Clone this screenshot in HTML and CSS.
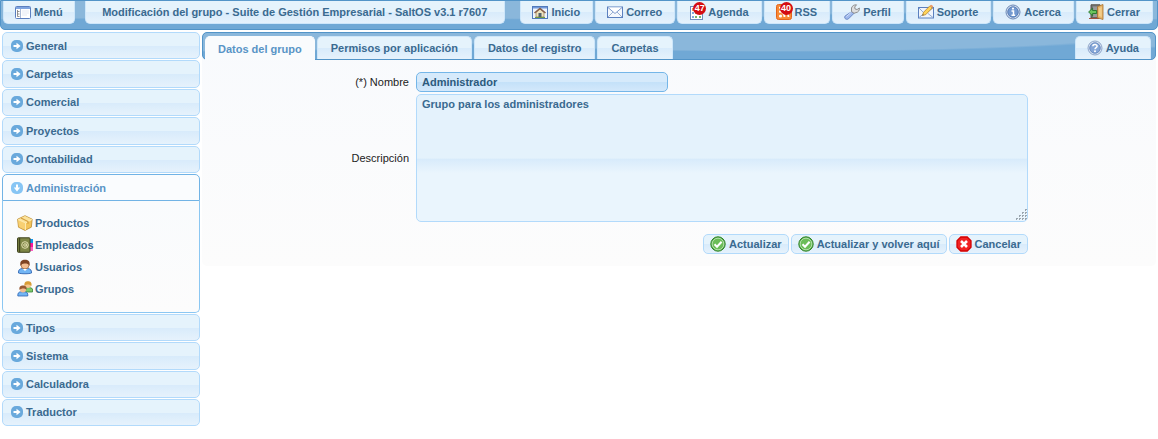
FILE: index.html
```html
<!DOCTYPE html>
<html lang="es">
<head>
<meta charset="utf-8">
<title>Modificación del grupo - SaltOS</title>
<link rel="stylesheet" href="styles.css">
</head>
<body>
<svg class="defs" aria-hidden="true">
  <symbol id="go" viewBox="0 0 12 12"><rect width="12" height="12" rx="5" fill="currentColor"/><path d="M2.500 5h3V2.800L9.600 6 5.500 9.200V7h-3z" fill="#fff"/></symbol>
  <symbol id="ok" viewBox="0 0 16 16"><circle cx="8" cy="8" r="7.200" fill="#4ba23c" stroke="#2f8428"/><circle cx="8" cy="8" r="5.900" fill="#6cbd58" stroke="#c5e8bd" stroke-width=".9"/><path d="M4.500 8.200l2.500 2.500 4.600-5" fill="none" stroke="#fff" stroke-width="2"/></symbol>
</svg>
<header class="topbar">
  <button class="tool" type="button"><svg class="ico" viewBox="0 0 16 16"><rect x=".5" y="2.500" width="15" height="12" rx="1" fill="#fff" stroke="#5b7fc0"/><path d="M1 3h14v2H1z" fill="#7fa5e0"/><path d="M5.500 5v9" stroke="#a9b9d6"/><path d="M2.500 6v6.500M2.500 7.500h2M2.500 10h2M2.500 12.500h2" stroke="#777" stroke-width=".8"/><path d="M7 7h7M7 9h7M7 11h5" stroke="#e4e9f3"/></svg>Menú</button>
  <button class="tool title" type="button">Modificación del grupo - Suite de Gestión Empresarial - SaltOS v3.1 r7607</button>
  <nav class="tools">
    <button class="tool" type="button"><svg class="ico" viewBox="0 0 16 16"><rect x=".5" y="2.500" width="15" height="12" fill="#eef4fc" stroke="#527abb"/><path d="M1 3h14v1.500H1z" fill="#7199da"/><path d="M4 8.500L8 5l4 3.500V13H4z" fill="#eee2bd" stroke="#9a7b4d" stroke-width=".7"/><path d="M2.500 9L8 4.500 13.500 9" fill="none" stroke="#865f4b" stroke-width="1.600"/><path d="M6.500 9h3v4h-3z" fill="#52636c"/><path d="M3 13.500h10" stroke="#6f9a43"/></svg>Inicio</button>
    <button class="tool" type="button"><svg class="ico" viewBox="0 0 16 16"><rect x=".5" y="3" width="15" height="10.500" fill="#f4f8fd" stroke="#5b80bf"/><path d="M1 13l5-5M15 13l-5-5" stroke="#9bb0d2"/><path d="M1 3.500l7 6 7-6" fill="#fff" stroke="#7f9cce"/></svg>Correo</button>
    <button class="tool" type="button"><span class="badged"><svg class="ico" viewBox="0 0 16 16"><rect x="1.500" y="2.500" width="12" height="13" fill="#fff" stroke="#6f8cbd"/><rect x="3" y="4" width="4" height="3" fill="#f0945c"/><path d="M3 8h2v2H3zM9 8h2v2H9zM3 12h2v2H3z" fill="#83a8d9"/><path d="M6 8h2v2H6zM6 12h2v2H6zM10 12h2v2h-2z" fill="#79b66a"/></svg><span class="badge">47</span></span>Agenda</button>
    <button class="tool" type="button"><span class="badged"><svg class="ico" viewBox="0 0 16 16"><rect x=".5" y=".5" width="15" height="15" rx="2" fill="#f78a35" stroke="#e4641b"/><circle cx="4.500" cy="12" r="1.600" fill="#fff"/><path d="M3 7.500a5.500 5.500 0 0 1 5.500 5.500M3 3.700a9.300 9.300 0 0 1 9.500 9.300" fill="none" stroke="#fff" stroke-width="1.800"/></svg><span class="badge">40</span></span>RSS</button>
    <button class="tool" type="button"><svg class="ico" viewBox="0 0 16 16"><path d="M8 7.500l2 1.800-5.500 5.500c-1 .8-2.600.6-3.300-.2-.8-.9-.6-2 0-2.700z" fill="#9fb9ec" stroke="#617fc0" stroke-width=".9"/><path d="M2.500 12.500l5-4.500" stroke="#d5e1fa"/><path d="M7.500 7.500V4C8 2 10 .6 12.500.8L10.700 3l.4 2 2 .5L15.400 4c.3 2.500-1.400 4.500-3.400 4.600l-2 .7z" fill="#dedede" stroke="#858585" stroke-width=".9"/></svg>Perfil</button>
    <button class="tool" type="button"><svg class="ico" viewBox="0 0 16 16"><rect x=".5" y="3.500" width="15" height="10.500" fill="#f0f5fc" stroke="#5b80bf"/><path d="M1 4l6 6 8-6M1 13.500l5-4M15 13.500l-5-4" fill="none" stroke="#94add3"/><path d="M4.500 11.500l1-3.200 6.500-6.600 2.300 2.200-6.500 6.700z" fill="#ffd45a" stroke="#b5842d" stroke-width=".8"/><path d="M12 1.700l1-1c1 0 2 1 2.200 2l-1 1z" fill="#ec9a6a"/><path d="M4.500 11.500l.4-1.300.9.900z" fill="#444"/></svg>Soporte</button>
    <button class="tool" type="button"><svg class="ico" viewBox="0 0 16 16"><circle cx="8" cy="8" r="7" fill="#dbe5f4" stroke="#6c88b5"/><circle cx="8" cy="8" r="5.300" fill="#7399d0" stroke="#486fa9" stroke-width=".8"/><path d="M6.500 7H8.500v4M6.500 11.200h3.600" fill="none" stroke="#fff" stroke-width="1.500"/><circle cx="8" cy="4.600" r="1.100" fill="#fff"/></svg>Acerca</button>
    <button class="tool" type="button"><svg class="ico" viewBox="0 0 16 16"><path d="M3 .8h9V14H3z" fill="#777" stroke="#565047"/><path d="M5 2.500h5V13H5z" fill="#9a9a9a"/><path d="M1 14.500h10" stroke="#a3503b"/><path d="M9.500 2.500L15 .5v15l-5.500-1.800z" fill="#e6b56a" stroke="#a8702c" stroke-width=".8"/><path d="M11 4l2.800-1v10L11 12z" fill="#f2cc88"/><path d="M.6 8l4-3.800v2.300h4v3h-4v2.300z" fill="#6bc35d" stroke="#23752a" stroke-width=".9"/></svg>Cerrar</button>
  </nav>
</header>
<div class="page">
  <aside class="sidebar">
    <div class="group upper">
      <button class="fold" type="button"><svg class="go"><use href="#go"/></svg>General</button>
      <button class="fold" type="button"><svg class="go"><use href="#go"/></svg>Carpetas</button>
      <button class="fold" type="button"><svg class="go"><use href="#go"/></svg>Comercial</button>
      <button class="fold" type="button"><svg class="go"><use href="#go"/></svg>Proyectos</button>
      <button class="fold" type="button"><svg class="go"><use href="#go"/></svg>Contabilidad</button>
    </div>
    <section>
      <button class="fold open" type="button"><svg class="go down"><use href="#go"/></svg>Administración</button>
      <div class="links">
        <a href="#"><svg class="ico" viewBox="0 0 16 16"><path d="M8 .7l7.200 3.500-.9 8L8 15.400l-6.500-3.200-.9-8z" fill="#f3c45b" stroke="#bd8b2e" stroke-width=".8"/><path d="M1 4.400L8 1l7 3.400L8.500 8z" fill="#fbe39c"/><path d="M1 4.500L8.500 8v7l-6.600-3.300z" fill="#f8d073"/><path d="M1 4.500L8.500 8 15 4.500M8.500 8v7" fill="none" stroke="#fff1bf" stroke-width=".8"/><path d="M4 3l7 3.500v2.300" fill="none" stroke="#d39c3c" stroke-width="1.200"/></svg>Productos</a>
        <a href="#"><svg class="ico" viewBox="0 0 16 16"><path d="M13 2h3v4h-3z" fill="#1495ed"/><path d="M13 6h3v4h-3z" fill="#ff169f"/><path d="M13 10h3v4h-3z" fill="#ff5fc4"/><rect x=".5" y=".8" width="12.500" height="14.500" rx=".8" fill="#7f8746" stroke="#3e421e"/><path d="M2.500 1v14" stroke="#42461f" stroke-width="1.400"/><circle cx="8" cy="8" r="3.300" fill="none" stroke="#e0ddae"/><circle cx="8" cy="8" r="1.300" fill="none" stroke="#e0ddae"/><path d="M9.500 6.500v2.800h1.500" fill="none" stroke="#e0ddae" stroke-width=".8"/></svg>Empleados</a>
        <a href="#"><svg class="ico" viewBox="0 0 16 16"><path d="M1.500 14c-.3-3 1-4.200 4-4.600h5c3 .4 4.200 1.700 4 4.600-2 1-11 1-13 0z" fill="#72b5f4" stroke="#2f64b2" stroke-width=".9"/><circle cx="8" cy="6" r="4" fill="#f3bd91" stroke="#9a5e35" stroke-width=".7"/><path d="M3.500 7C2.500 2 5 .8 8 .8S13.500 2 12.500 7C11.500 4.500 10 4.700 8 4.500S4.500 5 3.500 7z" fill="#804322"/><path d="M6 10l2 2 2-2z" fill="#fff"/></svg>Usuarios</a>
        <a href="#"><svg class="ico" viewBox="0 0 16 16"><path d="M6.500 11V8c1-1.800 8-2 9 0v3z" fill="#7fca6b" stroke="#388337" stroke-width=".8"/><circle cx="11" cy="4" r="3" fill="#f5c68d"/><path d="M7.500 5C7 1.500 8.500.3 11 .3S15 1.500 14.500 5C13 3 9 2.800 7.500 5z" fill="#d99d36"/><path d="M.8 15c-.2-3 1-4 3-4.200h4c2 .2 3.300 1.200 3 4.200z" fill="#72b5f4" stroke="#2f64b2" stroke-width=".8"/><circle cx="6" cy="8.400" r="3" fill="#f3bd91"/><path d="M2.500 9C2 5.500 3.500 4.500 6 4.500s4 1 3.500 4.500C8.500 7 4 7 2.500 9z" fill="#975932"/></svg>Grupos</a>
      </div>
    </section>
    <div class="group lower">
      <button class="fold" type="button"><svg class="go"><use href="#go"/></svg>Tipos</button>
      <button class="fold" type="button"><svg class="go"><use href="#go"/></svg>Sistema</button>
      <button class="fold" type="button"><svg class="go"><use href="#go"/></svg>Calculadora</button>
      <button class="fold" type="button"><svg class="go"><use href="#go"/></svg>Traductor</button>
    </div>
  </aside>
  <main class="panel">
    <nav class="tabs">
      <button class="tab current" type="button">Datos del grupo</button>
      <button class="tab" type="button">Permisos por aplicación</button>
      <button class="tab" type="button">Datos del registro</button>
      <button class="tab" type="button">Carpetas</button>
      <button class="tab help" type="button"><svg class="ico" viewBox="0 0 16 16"><circle cx="8" cy="8" r="7" fill="#dbe5f4" stroke="#8fa6ca"/><circle cx="8" cy="8" r="5.300" fill="#85a6d8" stroke="#5d80b8" stroke-width=".8"/><path d="M5.800 6.300c.2-2.500 4.400-2.300 4.300 0C10 7.700 8 7.500 8 9.300" fill="none" stroke="#fff" stroke-width="1.500"/><circle cx="8" cy="11.300" r="1" fill="#fff"/></svg>Ayuda</button>
    </nav>
    <form class="form">
      <label for="nombre">(*) Nombre</label>
      <input class="field name" id="nombre" type="text" value="Administrador">
      <label for="descripcion">Descripción</label>
      <textarea class="field notes" id="descripcion">Grupo para los administradores</textarea>
      <div class="actions">
        <button class="action" type="button"><svg class="ico"><use href="#ok"/></svg>Actualizar</button>
        <button class="action" type="button"><svg class="ico"><use href="#ok"/></svg>Actualizar y volver aquí</button>
        <button class="action" type="button"><svg class="ico" viewBox="0 0 16 16"><path d="M4.800 1h6.400L15 4.800v6.400L11.200 15H4.800L1 11.200V4.800z" fill="#f12323" stroke="#d40000" stroke-width="1.300"/><path d="M5 5l6 6M11 5l-6 6" stroke="#fff" stroke-width="2.600"/></svg>Cancelar</button>
      </div>
    </form>
  </main>
</div>
</body>
</html>
```
FILE: styles.css
```css
* { box-sizing: border-box; }
body {
  margin: 0;
  background: #fff;
  color: #222;
  font: 11px/14px "Liberation Sans", Arial, sans-serif;
}
button, input, textarea, .links a {
  margin: 0;
  font: bold 11px/14px "Liberation Sans", Arial, sans-serif;
  color: #3a6a90;
}
.defs { position: absolute; width: 0; height: 0; }
.ico { width: 16px; height: 16px; flex: none; display: block; }

.topbar, .tabs {
  background: radial-gradient(ellipse 380px 19px at 50% 0, #8ab7db 92%, #70a8d5 100%) 278px 0 / 600px 100% repeat-x #6da6d4;
  border: 1px solid #5294c8;
}
.topbar {
  display: flex;
  align-items: flex-start;
  gap: 10px;
  height: 30px;
  padding: 0 4px 0 2px;
  border-radius: 0 0 5px 5px;
}
.tools { display: flex; gap: 2px; margin-left: auto; }
.tool, .tab, .fold, .action {
  display: flex;
  align-items: center;
  gap: 3px;
  border: 1px solid #b2dafb;
  background: linear-gradient(#e5f3fc 50%, #d8ebfb 51%, #e6f2fc);
  white-space: nowrap;
}
.tool {
  height: 23px;
  padding: 0 11px;
  border-color: #cde6fa;
  border-top: 0;
  border-radius: 0 0 5px 5px;
}
.title { flex: 0 1 420px; justify-content: center; }
.tools .tool { padding: 0 12px 0 11px; }
.badged { position: relative; }
.badge {
  position: absolute;
  top: -2px;
  left: 4px;
  width: 13px;
  height: 13px;
  border-radius: 50%;
  background: #d40d12;
  color: #fff;
  font-size: 9px;
  line-height: 13px;
  text-align: center;
}

.page { display: flex; gap: 2px; padding: 2px; align-items: flex-start; }
.sidebar { width: 198px; flex: none; display: grid; gap: 1px; }
.group { display: grid; gap: 1px; grid-auto-rows: 1fr; }
.upper { min-height: 141px; }
.lower { min-height: 112px; }
.fold {
  width: 100%;
  min-height: 27px;
  padding: 0 8px;
  border-radius: 5px;
}
.go { width: 12px; height: 12px; color: #69a9dc; }
.open {
  background: #fafcfe;
  border-color: #71b3e5;
  border-radius: 5px 5px 0 0;
  color: #5894c6;
}
.down { transform: rotate(90deg); color: #87c5f4; }
.links {
  display: grid;
  gap: 6px;
  padding: 14px 14px 15px;
  border: 1px solid #8bc7f2;
  border-top: 0;
  border-radius: 0 0 5px 5px;
  background: linear-gradient(#f9fbfd, #fcfcfc);
}
.links a { display: flex; align-items: center; gap: 2px; text-decoration: none; }

.panel {
  flex: 1;
  min-width: 0;
  border-radius: 5px;
  background: linear-gradient(#f8fafd, #fcfcfc);
}
.tabs {
  display: flex;
  align-items: flex-end;
  gap: 2px;
  height: 28px;
  padding: 0 4px 0 2px;
  border-radius: 5px;
}
.tab {
  height: 23px;
  padding: 0 13px;
  border-color: #cde6fa;
  border-bottom: 0;
  border-radius: 5px 5px 0 0;
}
.current {
  height: 24px;
  margin-bottom: -1px;
  padding: 0 12px;
  background: #f9fbfd;
  border-color: #f9fbfd;
  color: #5894c6;
}
.help { margin-left: auto; padding: 0 11px; }
.form {
  display: grid;
  grid-template-columns: 207fr 612fr 121fr;
  gap: 2px 7px;
  align-items: center;
  padding: 12px 0;
}
.form label { text-align: right; grid-column: 1; }
.field {
  grid-column: 2;
  width: 100%;
  padding: 2px 5px;
  border: 1px solid #b2dafb;
  border-radius: 5px;
  outline: 0;
}
.name {
  max-width: 252px;
  height: 20px;
  border-color: #74b6e8;
  background: linear-gradient(#d6eafb 50%, #c4e1f9 51%, #d3e8fb);
  color: #2c5a7d;
}
.notes {
  height: 128px;
  background: linear-gradient(#e4f2fc 50%, #d8ebfb 51%, #eaf5fd 62%);
}
.notes::-webkit-resizer {
  background:
    linear-gradient(135deg, #eaf5fd 55%, transparent 55%),
    conic-gradient(#9aa5ae 25%, transparent 0) 0 0 / 3px 3px;
}
.actions {
  grid-column: 2;
  display: flex;
  justify-content: flex-end;
  gap: 2px;
  padding-top: 10px;
}
.action {
  height: 20px;
  padding: 0 6px;
  border-radius: 5px;
}
```
